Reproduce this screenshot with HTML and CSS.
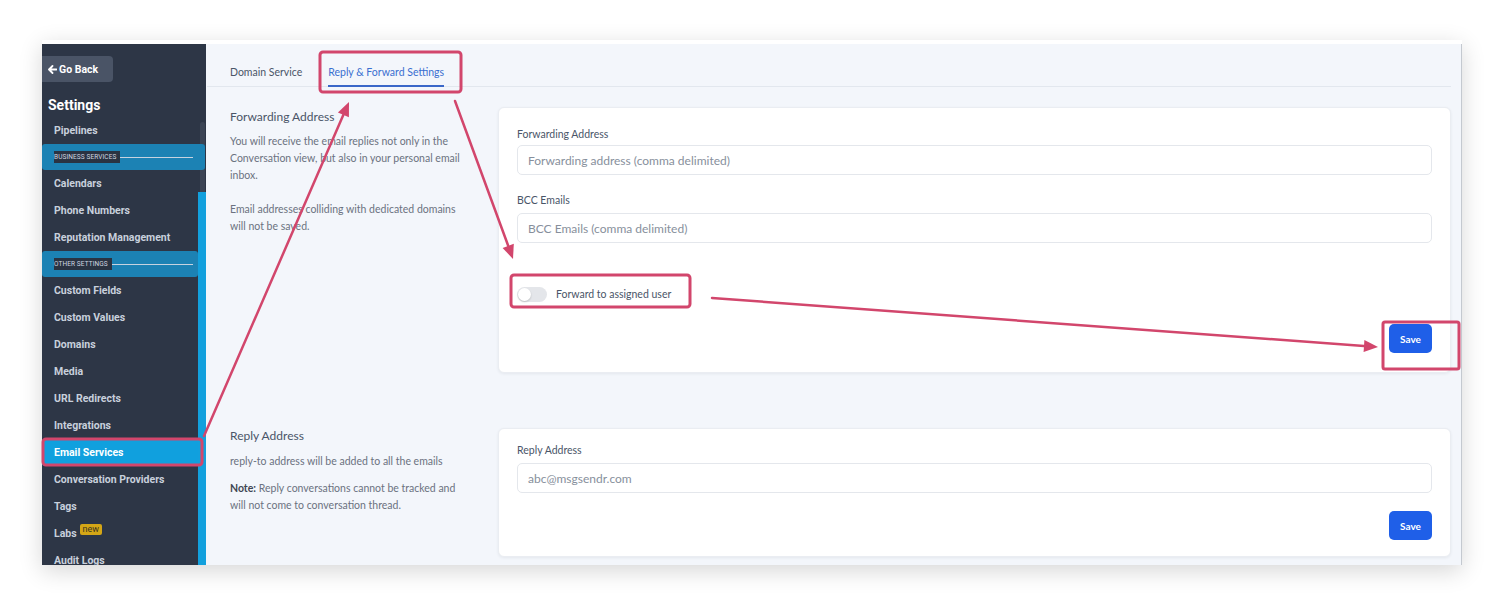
FILE: index.html
```html
<!DOCTYPE html>
<html lang="en">
<head>
<meta charset="utf-8">
<title>Reply &amp; Forward Settings</title>
<link rel="stylesheet" href="styles.css">
</head>
<body>
<div class="page">
  <div class="frame">
    <aside class="sidebar">
      <div class="side-inner">
        <a class="back"><svg class="back-icon" width="9" height="9" viewBox="0 0 9 9" xmlns="http://www.w3.org/2000/svg"><path d="M4.5 1 L1 4.5 L4.5 8 M1.2 4.5 H8.5" fill="none" stroke="#ffffff" stroke-width="1.8" stroke-linecap="round" stroke-linejoin="round"/></svg>Go Back</a>
        <h2 class="side-title">Settings</h2>
        <ul class="menu">
          <li class="item">Pipelines</li>
          <li class="band band-wide"><span class="band-label">Business Services</span><span class="band-line"></span></li>
          <li class="item">Calendars</li>
          <li class="item">Phone Numbers</li>
          <li class="item">Reputation Management</li>
          <li class="band"><span class="band-label">Other Settings</span><span class="band-line"></span></li>
          <li class="item">Custom Fields</li>
          <li class="item">Custom Values</li>
          <li class="item">Domains</li>
          <li class="item">Media</li>
          <li class="item">URL Redirects</li>
          <li class="item">Integrations</li>
          <li class="item active">Email Services</li>
          <li class="item">Conversation Providers</li>
          <li class="item">Tags</li>
          <li class="item">Labs <span class="badge">new</span></li>
          <li class="item">Audit Logs</li>
        </ul>
      </div>
      <div class="scroll"><div class="track"></div><div class="thumb"></div></div>
    </aside>
    <main class="main">
      <nav class="tabs">
        <span class="tab">Domain Service</span>
        <span class="tab tab-active">Reply &amp; Forward Settings</span>
      </nav>
      <section class="row">
        <div class="info">
          <h3 class="info-title">Forwarding Address</h3>
          <p class="info-text">You will receive the email replies not only in the Conversation view, but also in your personal email inbox.</p>
          <p class="info-text gap">Email addresses colliding with dedicated domains will not be saved.</p>
        </div>
        <div class="card card1">
          <label class="label">Forwarding Address</label>
          <div class="input input-first placeholder">Forwarding address (comma delimited)</div>
          <label class="label label-next">BCC Emails</label>
          <div class="input placeholder">BCC Emails (comma delimited)</div>
          <div class="toggle-row">
            <span class="switch"><span class="knob"></span></span>
            <span class="toggle-label">Forward to assigned user</span>
          </div>
          <div class="actions"><button class="save">Save</button></div>
        </div>
      </section>
      <section class="row row2">
        <div class="info">
          <h3 class="info-title">Reply Address</h3>
          <p class="info-text t2">reply-to address will be added to all the emails</p>
          <p class="info-text t3"><strong>Note:</strong> Reply conversations cannot be tracked and will not come to conversation thread.</p>
        </div>
        <div class="card card2">
          <label class="label">Reply Address</label>
          <div class="input placeholder">abc@msgsendr.com</div>
          <div class="actions actions2"><button class="save">Save</button></div>
        </div>
      </section>
    </main>
  </div>
  <svg class="annot" width="1502" height="606" viewBox="0 0 1502 606" xmlns="http://www.w3.org/2000/svg">
    <g fill="none" stroke="#d2466c" stroke-width="3">
      <rect x="320" y="52" width="141" height="40" rx="3"/>
      <rect x="43" y="439" width="159" height="26" rx="3"/>
      <rect x="511" y="275" width="179" height="32" rx="3"/>
      <rect x="1383" y="322" width="76" height="47" rx="2"/>
    </g>
    <g stroke="#d2466c" stroke-width="2.5" stroke-linecap="round">
      <line x1="204" y1="436" x2="343.4" y2="114.8"/>
      <line x1="455" y1="101" x2="508.2" y2="245.8"/>
      <line x1="712" y1="298" x2="1364" y2="346"/>
    </g>
    <g fill="#d2466c">
      <polygon points="349,102 348.9,117.2 337.9,112.4"/>
      <polygon points="513,259 513.8,243.7 502.6,247.9"/>
      <polygon points="1378,347 1363.6,352 1364.4,340"/>
    </g>
  </svg>
</div>
</body>
</html>
```
FILE: styles.css
```css
* { box-sizing: border-box; }
html, body { margin: 0; padding: 0; }
body {
  background: #ffffff;
  font-family: Lato, "Liberation Sans", sans-serif;
  width: 1502px;
  height: 606px;
  overflow: hidden;
}
.page {
  position: relative;
  width: 1502px;
  height: 606px;
  padding: 40px 0 0 42px;
}
.frame {
  display: flex;
  width: 1420px;
  height: 525px;
  border-top: 4px solid #ffffff;
  overflow: hidden;
  background: #f3f6fb;
  box-shadow: 0 6px 22px rgba(0, 0, 0, 0.16);
}
/* Sidebar */
.sidebar {
  display: flex;
  width: 164px;
  flex: none;
  background: #2d3646;
  font-family: Roboto, "Liberation Sans", sans-serif;
  overflow: hidden;
}
.side-inner {
  width: 156px;
  flex: none;
  display: flex;
  flex-direction: column;
  padding-top: 12px;
}
.side-inner > * { flex: none; }
.back {
  display: flex;
  align-items: center;
  gap: 2px;
  width: 71px;
  height: 26px;
  padding-left: 6px;
  background: #4a5466;
  border-radius: 0 4px 4px 0;
  color: #ffffff;
  font-weight: 700;
  font-size: 10.5px;
}
.back-icon { flex: none; }
.side-title {
  margin: 14px 0 0 6px;
  font-size: 14px;
  line-height: 18px;
  font-weight: 700;
  color: #ffffff;
}
.menu {
  list-style: none;
  margin: 3px 0 0 0;
  padding: 0;
}
.item {
  display: flex;
  align-items: center;
  height: 27px;
  padding-left: 12px;
  font-size: 10.5px;
  font-weight: 700;
  color: #c8d0dc;
  white-space: nowrap;
}
.item.active {
  background: #10a0de;
  color: #ffffff;
  border-radius: 3px;
  margin-right: -2px;
}
.band {
  display: flex;
  align-items: center;
  height: 26px;
  padding: 0 5px 0 12px;
  background: #1c82b4;
  border-radius: 3px;
  position: relative;
  z-index: 1;
}
.band-wide { margin-right: -7px; padding-right: 12px; }
.band-label {
  background: #2a3342;
  color: #cfd6e0;
  font-size: 6.5px;
  font-weight: 400;
  text-transform: uppercase;
  padding: 2px 4px 2px 0;
  line-height: 8px;
  letter-spacing: 0.1px;
}
.band-line {
  flex: 1;
  height: 1px;
  background: #c6d3e0;
}
.badge {
  display: inline-block;
  margin: -9px 0 0 3px;
  padding: 0 3px;
  background: #d4a616;
  color: #3b3420;
  font-size: 9px;
  font-weight: 400;
  line-height: 11px;
  border-radius: 2px;
}
.scroll {
  width: 8px;
  flex: none;
  display: flex;
  flex-direction: column;
  padding-top: 78px;
}
.track {
  height: 70px;
  width: 5px;
  margin-left: 2px;
  background: #3b4454;
  border-radius: 3px 3px 0 0;
  flex: none;
}
.thumb {
  flex: 1;
  background: #12a0dd;
}
/* Main */
.main {
  flex: 1;
  display: flex;
  flex-direction: column;
  padding-right: 10px;
  border-right: 1px solid #c4c9d0;
  color: #4a5568;
}
.main > * { flex: none; }
.tabs {
  display: flex;
  gap: 26px;
  height: 43px;
  padding-left: 23px;
  margin-left: 1px;
  border-bottom: 1px solid #e2e7ee;
}
.tab {
  display: flex;
  align-items: center;
  height: 43px;
  padding-top: 14px;
  font-size: 10.5px;
  color: #4a5568;
  border-bottom: 2px solid transparent;
  margin-bottom: -1px;
}
.tab-active {
  color: #3a6fd0;
  border-bottom-color: #3a67c8;
}
.row {
  display: grid;
  grid-template-columns: 268px 1fr;
  padding-left: 24px;
  margin-top: 20px;
}
.row2 { margin-top: 55px; }
.info { padding-top: 2px; }
.info-title {
  margin: 0;
  font-size: 12px;
  line-height: 16px;
  font-weight: 400;
  color: #4a5568;
}
.info-text {
  margin: 8px 0 0 0;
  max-width: 240px;
  font-size: 10.5px;
  line-height: 17px;
  color: #6b7280;
}
.info-text.gap { margin-top: 17px; }
.info-text strong { color: #3f4653; font-weight: 700; }
.row2 .info { padding-top: 0; }
.info-text.t2 { margin-top: 9px; max-width: 260px; }
.info-text.t3 { margin-top: 10px; max-width: 240px; }
.card {
  background: #ffffff;
  border: 1px solid #eaedf2;
  border-radius: 6px;
  box-shadow: 0 1px 3px rgba(30, 40, 60, 0.07);
  padding: 19px 18px 19px;
  display: flex;
  flex-direction: column;
}
.card2 { padding-top: 14px; padding-bottom: 16px; }
.label {
  display: block;
  font-size: 10.5px;
  line-height: 14px;
  color: #4a5568;
}
.label-next { margin-top: 18px; }
.input {
  margin-top: 6px;
  height: 30px;
  border: 1px solid #e4e7ec;
  border-radius: 5px;
  display: flex;
  align-items: center;
  padding-left: 10px;
  font-size: 12px;
}
.input.input-first { margin-top: 4px; }
.placeholder { color: #878f9c; }
.toggle-row {
  display: flex;
  align-items: center;
  gap: 9px;
  margin-top: 43px;
  height: 16px;
}
.switch {
  width: 30px;
  height: 15px;
  border-radius: 8px;
  background: #e4e6ea;
  display: flex;
  align-items: center;
  padding-left: 1px;
}
.knob {
  width: 13px;
  height: 13px;
  border-radius: 50%;
  background: #ffffff;
  box-shadow: 0 1px 2px rgba(0, 0, 0, 0.18);
}
.toggle-label {
  font-size: 10.5px;
  color: #4a5568;
}
.actions {
  display: flex;
  justify-content: flex-end;
  margin-top: 22px;
}
.actions2 { margin-top: 18px; }
.save {
  width: 43px;
  height: 29px;
  border: none;
  border-radius: 5px;
  background: #1f5fe8;
  color: #ffffff;
  font-family: Lato, "Liberation Sans", sans-serif;
  font-size: 10px;
  font-weight: 700;
  padding: 0;
}
.annot {
  position: absolute;
  left: 0;
  top: 0;
  pointer-events: none;
}
```
